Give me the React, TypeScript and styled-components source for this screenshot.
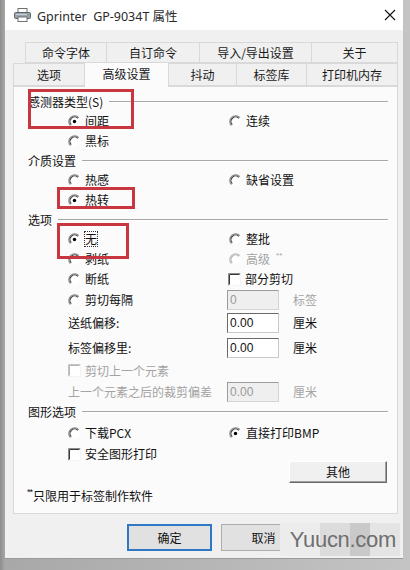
import React from "react";
import styled, { createGlobalStyle } from "styled-components";

const GlobalStyle = createGlobalStyle`
  html, body { margin: 0; padding: 0; background: #b3b3b3; }
  body { font-family: "Noto Sans", "Noto Sans CJK SC", sans-serif; color: #111; }
  * { box-sizing: border-box; }
`;

const CJK = `"Noto Sans CJK SC", "Noto Sans", sans-serif`;

const Frame = styled.div`
  position: relative;
  width: 410px;
  height: 570px;
  padding: 0 7px 12px 5px;
  background: linear-gradient(90deg, #8d8d8d 0, #a8a8a8 5px, #c4c4c4 100%);
`;

const Window = styled.div`
  width: 398px;
  height: 558px;
  background: #f0f0f0;
  display: flex;
  flex-direction: column;
  box-shadow: 0 1px 0 #9a9a9a;
`;

const TitleBar = styled.div`
  height: 30px;
  background: #ffffff;
  display: flex;
  align-items: center;
  padding: 0 4px 0 9px;
`;

const TitleText = styled.div`
  flex: 1;
  margin-left: 6px;
  font-family: "Noto Sans", "Noto Sans CJK SC", sans-serif;
  font-size: 12.5px;
  color: #2a2a2a;
  white-space: pre;
`;

const CloseBtn = styled.div`
  width: 18px;
  height: 18px;
  display: flex;
  align-items: center;
  justify-content: center;
`;

const Body = styled.div`
  flex: 1;
  padding: 12px 5px 0 8px;
  display: flex;
  flex-direction: column;
`;

const Tabs = styled.div`
  display: flex;
  flex-direction: column;
`;

const TabRow = styled.div<{ $indent: number; $h: number }>`
  display: flex;
  align-items: flex-end;
  height: ${(p) => p.$h}px;
  margin-left: ${(p) => p.$indent}px;
  position: relative;
  z-index: 2;
`;

const Tab = styled.div<{ $w: number; $active?: boolean }>`
  width: ${(p) => p.$w}px;
  height: ${(p) => (p.$active ? "25px" : "100%")};
  margin-left: -1px;
  margin-bottom: ${(p) => (p.$active ? -1 : 0)}px;
  border: 1px solid #d9d9d9;
  border-bottom: ${(p) => (p.$active ? "none" : "1px solid #d9d9d9")};
  background: ${(p) => (p.$active ? "#fbfbfb" : "#f0f0f0")};
  display: flex;
  align-items: center;
  justify-content: center;
  font-family: ${CJK};
  font-size: 12px;
  line-height: 14px;
  color: #1a1a1a;
  padding-bottom: ${(p) => (p.$active ? 3 : 0)}px;
  &:first-child { margin-left: 0; }
`;

const Panel = styled.div`
  position: relative;
  width: 385px;
  height: 428px;
  border: 1px solid #d9d9d9;
  background: #fbfbfb;
  padding-top: 5px;
  display: flex;
  flex-direction: column;
  font-family: ${CJK};
  font-size: 12px;
`;

const Section = styled.div<{ $h: number }>`
  height: ${(p) => p.$h}px;
  display: flex;
  align-items: center;
  padding: 0 9px 0 14px;
  line-height: 14px;
  color: #111;
`;

const Rule = styled.div`
  flex: 1;
  margin-left: 6px;
  border-top: 1px solid #a8a8a8;
  border-bottom: 1px solid #ffffff;
`;

const Row = styled.div<{ $h: number }>`
  height: ${(p) => p.$h}px;
  display: grid;
  grid-template-columns: 159px 1fr;
  padding-left: 54px;
  align-items: center;
`;

const Cell = styled.div<{ $dim?: boolean; $shift?: number }>`
  display: flex;
  align-items: center;
  gap: 4px;
  line-height: 14px;
  margin-left: ${(p) => p.$shift ?? 0}px;
  color: ${(p) => (p.$dim ? "#a3a3a3" : "#111")};
  white-space: nowrap;
`;

const Focus = styled.span`
  outline: 1px dotted #333;
  outline-offset: 0px;
`;

const Sup = styled.span`
  font-size: 8px;
  line-height: 8px;
  align-self: flex-start;
  margin-left: 2px;
  color: inherit;
  font-family: "Liberation Sans", sans-serif;
`;

const Field = styled.div<{ $disabled?: boolean }>`
  width: 52px;
  height: 20px;
  border: 1px solid;
  border-color: ${(p) =>
    p.$disabled ? "#9c9c9c #d4d4d4 #d4d4d4 #9c9c9c" : "#6a6a6a #c9c9c9 #c9c9c9 #6a6a6a"};
  background: ${(p) => (p.$disabled ? "#efefef" : "#ffffff")};
  color: ${(p) => (p.$disabled ? "#9a9a9a" : "#111")};
  font-family: "Liberation Sans", sans-serif;
  font-size: 12px;
  line-height: 18px;
  padding-left: 2px;
`;

const Unit = styled.span<{ $dim?: boolean }>`
  margin-left: 10px;
  color: ${(p) => (p.$dim ? "#a3a3a3" : "#111")};
`;

const ButtonRow = styled.div`
  display: flex;
  justify-content: flex-end;
  padding-right: 10px;
  margin-top: -2px;
`;

const ClassicButton = styled.div`
  width: 98px;
  height: 22px;
  border: 1px solid;
  border-color: #ffffff #696969 #696969 #ffffff;
  box-shadow: inset -1px -1px 0 #a0a0a0;
  background: #f0f0f0;
  display: flex;
  align-items: center;
  justify-content: center;
  line-height: 14px;
`;

const Note = styled.div`
  height: 22px;
  display: flex;
  align-items: center;
  padding-left: 13px;
  margin-top: 2px;
  line-height: 14px;
`;

const NoteMark = styled.span`
  font-family: "Liberation Sans", sans-serif;
  font-size: 9px;
  line-height: 9px;
  align-self: flex-start;
  margin-top: 3px;
  letter-spacing: -1px;
  margin-right: 1px;
`;

const Footer = styled.div`
  display: flex;
  gap: 9px;
  padding-left: 114px;
  margin-top: 10px;
`;

const DialogButton = styled.div<{ $default?: boolean }>`
  width: 85px;
  height: 27px;
  border: ${(p) => (p.$default ? "2px solid #2f78c4" : "1px solid #adadad")};
  background: #e1e1e1;
  display: flex;
  align-items: center;
  justify-content: center;
  font-family: ${CJK};
  font-size: 12px;
  line-height: 14px;
  color: #111;
`;

const RedBox = styled.div<{ $l: number; $t: number; $w: number; $h: number }>`
  position: absolute;
  left: ${(p) => p.$l}px;
  top: ${(p) => p.$t}px;
  width: ${(p) => p.$w}px;
  height: ${(p) => p.$h}px;
  border: 3px solid #c8373f;
  pointer-events: none;
`;

const Watermark = styled.div`
  position: absolute;
  left: 280px;
  top: 523px;
  width: 120px;
  height: 33px;
  background: linear-gradient(90deg, #ececec 0, #ececec 40px, #dcdcdc 40px, #dcdcdc 70px, #c9c9c9 70px, #c9c9c9 90px, #e4e4e4 90px);
  display: flex;
  align-items: center;
  justify-content: flex-end;
  padding-right: 4px;
  font-family: "Liberation Sans", sans-serif;
  font-size: 22px;
  color: #6f6f6f;
  letter-spacing: -0.3px;
`;

const Radio = ({ checked, dim }: { checked?: boolean; dim?: boolean }) => (
  <svg width="13" height="13" viewBox="0 0 13 13">
    <circle cx="6.5" cy="6.5" r="5" fill="#ffffff" />
    <path d="M10.8 2.6 A5.8 5.8 0 0 0 2.4 10.6" stroke={dim ? "#c0c0c0" : "#8a8a8a"} strokeWidth="1.2" fill="none" />
    <path d="M9.8 3.4 A4.5 4.5 0 0 0 3.3 9.7" stroke={dim ? "#b0b0b0" : "#3a3a3a"} strokeWidth="1.1" fill="none" />
    {checked && <circle cx="6.5" cy="6.5" r="1.7" fill="#000" />}
  </svg>
);

const Check = ({ dim }: { dim?: boolean }) => (
  <svg width="13" height="13" viewBox="0 0 13 13">
    <rect x="0" y="0" width="13" height="13" fill="#ffffff" />
    <path d="M0.5 12.5 V0.5 H12.5" stroke={dim ? "#c4c4c4" : "#8a8a8a"} strokeWidth="1" fill="none" />
    <path d="M1.5 11.5 V1.5 H11.5" stroke={dim ? "#b4b4b4" : "#3a3a3a"} strokeWidth="1" fill="none" />
    <path d="M0.5 12.5 H12.5 V0.5" stroke="#f4f4f4" strokeWidth="1" fill="none" />
  </svg>
);

const PrinterIcon = () => (
  <svg width="17" height="14" viewBox="0 0 17 14">
    <rect x="4" y="0.5" width="9" height="4" fill="#fff" stroke="#707070" />
    <rect x="0.5" y="4.5" width="16" height="6" rx="1" fill="#9aa3ad" stroke="#5b6570" />
    <rect x="2" y="6" width="13" height="1" fill="#c9d0d6" />
    <rect x="4" y="9" width="9" height="4.5" fill="#fff" stroke="#707070" />
    <rect x="13" y="6" width="2" height="1" fill="#4caf50" />
  </svg>
);

const CloseIcon = () => (
  <svg width="12" height="12" viewBox="0 0 12 12">
    <path d="M1 1 L11 11 M11 1 L1 11" stroke="#111" strokeWidth="1.1" />
  </svg>
);

export default function App() {
  return (
    <>
      <GlobalStyle />
      <Frame>
        <Window>
          <TitleBar>
            <PrinterIcon />
            <TitleText>{"Gprinter  GP-9034T 属性"}</TitleText>
            <CloseBtn>
              <CloseIcon />
            </CloseBtn>
          </TitleBar>
          <Body>
            <Tabs>
              <TabRow $indent={12} $h={21}>
                <Tab $w={82}>命令字体</Tab>
                <Tab $w={94}>自订命令</Tab>
                <Tab $w={113}>导入/导出设置</Tab>
                <Tab $w={87}>关于</Tab>
              </TabRow>
              <TabRow $indent={0} $h={23}>
                <Tab $w={72}>选项</Tab>
                <Tab $w={85} $active>高级设置</Tab>
                <Tab $w={69}>抖动</Tab>
                <Tab $w={71}>标签库</Tab>
                <Tab $w={92}>打印机内存</Tab>
              </TabRow>
            </Tabs>
            <Panel>
              <Section $h={19}>
                <span>感测器类型(S)</span>
                <Rule />
              </Section>
              <Row $h={20}>
                <Cell><Radio checked />间距</Cell>
                <Cell $shift={2}><Radio />连续</Cell>
              </Row>
              <Row $h={20}>
                <Cell><Radio />黑标</Cell>
              </Row>
              <Section $h={19}>
                <span>介质设置</span>
                <Rule />
              </Section>
              <Row $h={20}>
                <Cell><Radio />热感</Cell>
                <Cell $shift={2}><Radio />缺省设置</Cell>
              </Row>
              <Row $h={20}>
                <Cell><Radio checked />热转</Cell>
              </Row>
              <Section $h={19}>
                <span>选项</span>
                <Rule />
              </Section>
              <Row $h={20}>
                <Cell><Radio checked /><Focus>无</Focus></Cell>
                <Cell $shift={2}><Radio />整批</Cell>
              </Row>
              <Row $h={20}>
                <Cell><Radio />剥纸</Cell>
                <Cell $shift={2} $dim><Radio dim />高级<Sup>**</Sup></Cell>
              </Row>
              <Row $h={20}>
                <Cell><Radio />断纸</Cell>
                <Cell $shift={1}><Check />部分剪切</Cell>
              </Row>
              <Row $h={22}>
                <Cell><Radio />剪切每隔</Cell>
                <Cell><Field $disabled>0</Field><Unit $dim>标签</Unit></Cell>
              </Row>
              <Row $h={24}>
                <Cell>送纸偏移:</Cell>
                <Cell><Field>0.00</Field><Unit>厘米</Unit></Cell>
              </Row>
              <Row $h={25}>
                <Cell>标签偏移里:</Cell>
                <Cell><Field>0.00</Field><Unit>厘米</Unit></Cell>
              </Row>
              <Row $h={21}>
                <Cell $dim><Check dim />剪切上一个元素</Cell>
              </Row>
              <Row $h={21}>
                <Cell $dim>上一个元素之后的裁剪偏差</Cell>
                <Cell><Field $disabled>0.00</Field><Unit $dim>厘米</Unit></Cell>
              </Row>
              <Section $h={19}>
                <span>图形选项</span>
                <Rule />
              </Section>
              <Row $h={24}>
                <Cell><Radio />下载PCX</Cell>
                <Cell $shift={2}><Radio checked />直接打印BMP</Cell>
              </Row>
              <Row $h={18}>
                <Cell><Check />安全图形打印</Cell>
              </Row>
              <ButtonRow>
                <ClassicButton>其他</ClassicButton>
              </ButtonRow>
              <Note>
                <NoteMark>**</NoteMark>只限用于标签制作软件
              </Note>
              <RedBox $l={14} $t={2} $w={106} $h={40} />
              <RedBox $l={43} $t={100} $w={78} $h={22} />
              <RedBox $l={43} $t={136} $w={72} $h={36} />
            </Panel>
            <Footer>
              <DialogButton $default>确定</DialogButton>
              <DialogButton>取消</DialogButton>
            </Footer>
          </Body>
        </Window>
        <Watermark>Yuucn.com</Watermark>
      </Frame>
    </>
  );
}
